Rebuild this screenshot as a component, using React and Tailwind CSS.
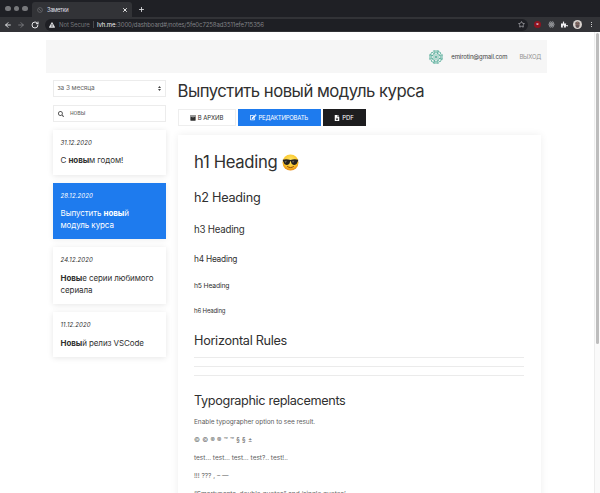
import React from "react";
import { FaArchive, FaEdit, FaFileDownload, FaSearch, FaPuzzlePiece, FaExclamationTriangle } from "react-icons/fa";
import { ArrowLeft, ArrowRight, RotateCw, Star, X, Plus } from "lucide-react";

function Browser() {
  return (
    <header className="flex h-8 shrink-0 flex-col bg-[#323337]">
      <div className="flex h-[17px] items-end bg-[#1f2025]">
        <div className="flex h-full w-8 items-center gap-[3px] pl-[5px]">
          <span className="size-[5.5px] rounded-full bg-[#77787b]" />
          <span className="size-[5.5px] rounded-full bg-[#77787b]" />
          <span className="size-[5.5px] rounded-full bg-[#77787b]" />
        </div>
        <div className="flex h-[15px] w-[100px] items-center rounded-t-[3px] bg-[#323337] pl-[5px] pr-[4px]">
          <svg className="size-[6px] text-[#66676b]" viewBox="0 0 12 12" fill="none" stroke="currentColor" strokeWidth="1.6">
            <circle cx="6" cy="6" r="4.8" />
            <path d="M3 3l6 6" />
          </svg>
          <span className="ml-[4px] grow text-[5.8px] leading-none tracking-[-0.4px] text-[#dcdde0]">Заметки</span>
          <X className="size-[6px] text-white" strokeWidth={3.5} />
        </div>
        <Plus className="mb-[4.5px] ml-[5.5px] size-[7px] text-[#dcdde0]" strokeWidth={3} />
      </div>
      <div className="flex h-[15px] items-center">
        <ArrowLeft className="ml-[4px] size-[8px] text-[#e6e7e9]" strokeWidth={2.8} />
        <ArrowRight className="ml-[5px] size-[8px] text-[#797a7e]" strokeWidth={2.8} />
        <RotateCw className="ml-[6px] size-[8px] text-[#e6e7e9]" strokeWidth={3} />
        <div className="ml-[6px] flex h-[12px] w-[483px] items-center rounded-full bg-[#1e1f24] pl-[4px] pr-[3px] text-[6px] leading-none">
          <FaExclamationTriangle className="size-[6px] text-[#dcdde0]" />
          <span className="ml-[4px] tracking-[-0.12px] text-[#75767a]">Not Secure</span>
          <span className="ml-[3px] h-[7px] w-px bg-[#48494d]" />
          <span className="ml-[3.5px] tracking-[-0.09px] text-[#808185]">
            <span className="text-[#f1f1f3]">lvh.me</span>:3000/dashboard#/notes/5fe0c7258ad3511efe715356
          </span>
          <Star className="ml-auto size-[7px] text-[#c6c7ca]" strokeWidth={2.2} />
        </div>
        <div className="ml-[6px] flex size-[7px] items-center justify-center rounded-full bg-[#8f1420] text-[3px] font-bold leading-none text-white">u</div>
        <svg className="ml-[6.5px] size-[7px] text-[#8f9094]" viewBox="0 0 14 14" fill="none" stroke="currentColor" strokeWidth="1.6">
          <circle cx="7" cy="7" r="2.6" fill="currentColor" />
          <ellipse cx="7" cy="7" rx="6.3" ry="2.7" />
          <ellipse cx="7" cy="7" rx="6.3" ry="2.7" transform="rotate(60 7 7)" />
          <ellipse cx="7" cy="7" rx="6.3" ry="2.7" transform="rotate(120 7 7)" />
        </svg>
        <FaPuzzlePiece className="ml-[6.5px] size-[7px] text-[#f1f1f3]" />
        <svg className="ml-[5px] size-[9px]" viewBox="0 0 18 18">
          <circle cx="9" cy="9" r="9" fill="#d8d2ce" />
          <path d="M4 8c0-7 10-7 10 0l-2-2H6z" fill="#4d4442" />
          <ellipse cx="9" cy="9" rx="4" ry="4.5" fill="#b88f83" />
          <path d="M5 9h8v3c-1 5-7 5-8 0z" fill="#605355" />
          <path d="M5 7.5h8" stroke="#3c3535" strokeWidth="1.5" />
        </svg>
        <div className="ml-[8.5px] flex flex-col gap-[1px]">
          <span className="size-[1.3px] rounded-full bg-white" />
          <span className="size-[1.3px] rounded-full bg-white" />
          <span className="size-[1.3px] rounded-full bg-white" />
        </div>
      </div>
    </header>
  );
}

function Identicon() {
  return (
    <svg className="size-[14px]" viewBox="0 0 28 28" fill="none" stroke="#4fa996" strokeWidth="1.6">
      {[0, 90, 180, 270].map((a) => (
        <g key={a} transform={`rotate(${a} 14 14)`}>
          <path d="M9 1.5h4L11 5zM15 1.5h4L17 5zM10 7l4-2 4 2-4 4z" />
          <path d="M3 9l3-5 4 3-3 4zM11 11l3 3" />
        </g>
      ))}
    </svg>
  );
}

function CoolFace() {
  return (
    <svg className="mb-[1px] ml-[5px] size-[17px]" viewBox="0 0 34 34">
      <defs>
        <radialGradient id="face" cx="50%" cy="35%" r="65%">
          <stop offset="0" stopColor="#ffe768" />
          <stop offset="0.65" stopColor="#fbc62c" />
          <stop offset="1" stopColor="#e98a12" />
        </radialGradient>
      </defs>
      <circle cx="17" cy="17" r="16" fill="url(#face)" />
      <path d="M1.5 11.5c5-1.5 10-1.5 15.500.5 5.500-2 10.500-2 15.500-.5l-.5 3c-.8.4-1 1-1.300 2-1 4.500-4 5.500-7 5.300-3.500-.2-5.200-3-5.700-6.300-.3-1.300-1.700-1.300-2 0-.5 3.300-2.200 6.100-5.700 6.300-3 .2-6-.8-7-5.300-.3-1-.5-1.600-1.300-2z" fill="#26221f" />
      <path d="M5 14l5-.5-3 5z" fill="#68615a" />
      <path d="M20 14l5-.5-3 5z" fill="#68615a" />
      <path d="M11 25c4 3 8 3 12 0" stroke="#8f4b0c" strokeWidth="2" fill="none" strokeLinecap="round" />
    </svg>
  );
}

function NoteCard({ date, active, children }) {
  return (
    <article
      className={
        active
          ? "flex flex-col bg-[#1e7bee] px-[8px] pb-[8px] pt-[8px] text-white shadow-[0_1px_6px_rgba(0,0,0,0.07)]"
          : "flex flex-col bg-white px-[8px] pb-[8.5px] pt-[8px] text-[#303030] shadow-[0_1px_6px_rgba(0,0,0,0.1)]"
      }
    >
      <time className="text-[6px] italic leading-[9px] tracking-[0.13px]">{date}</time>
      <p className="mt-[7px] whitespace-nowrap pt-[0.5px] text-[8px] leading-[12px] tracking-[-0.08px]">{children}</p>
    </article>
  );
}

function Sidebar() {
  return (
    <aside className="flex w-[113px] shrink-0 flex-col">
      <div className="flex h-[17px] items-center justify-between border border-[#ececec] px-[4px] text-[6.5px] text-[#666]">
        <span className="tracking-[-0.1px]">за 3 месяца</span>
        <svg className="h-[5px] w-[3px]" viewBox="0 0 6 10" fill="#444">
          <path d="M3 0l3 4.200H0zM3 10l3-4.200H0z" />
        </svg>
      </div>
      <div className="mt-[8px] flex h-[17px] items-center border border-[#ececec] px-[4.5px] text-[6.3px] text-[#666]">
        <FaSearch className="size-[6px] text-[#555]" />
        <span className="ml-[6px] tracking-[-0.1px]">новы</span>
      </div>
      <div className="mt-[7.5px] flex flex-col gap-[8px]">
        <NoteCard date="31.12.2020">С <b>новы</b>м годом!</NoteCard>
        <NoteCard date="28.12.2020" active>Выпустить <b>новы</b>й<br />модуль курса</NoteCard>
        <NoteCard date="24.12.2020"><b>Новы</b>е серии любимого<br />сериала</NoteCard>
        <NoteCard date="11.12.2020"><b>Новы</b>й релиз VSCode</NoteCard>
      </div>
    </aside>
  );
}

function Note() {
  return (
    <main className="flex w-[363px] flex-col">
      <h1 className="h-[23px] whitespace-nowrap text-[16.7px] leading-[23px] tracking-[-0.5px] text-[#303030]">Выпустить новый модуль курса</h1>
      <div className="mt-[6px] flex h-[17px] gap-[2px] text-[6px] leading-none">
        <button className="flex w-[58px] items-center justify-center gap-[2px] border border-[#eee] bg-white tracking-[-0.1px] text-[#303030]">
          <FaArchive className="size-[6px]" />В АРХИВ
        </button>
        <button className="flex w-[83px] items-center justify-center gap-[2px] bg-[#1e7bee] tracking-[-0.25px] text-white">
          <FaEdit className="size-[6.5px]" />РЕДАКТИРОВАТЬ
        </button>
        <button className="flex w-[43px] items-center justify-center gap-[2px] bg-[#1d1d1f] tracking-[-0.1px] text-white">
          <FaFileDownload className="size-[6px]" />PDF
        </button>
      </div>
      <section className="mt-[9px] h-[380px] whitespace-nowrap bg-white px-[16.5px] pt-[17px] text-[#303030] shadow-[0_0_8px_rgba(0,0,0,0.07)]">
        <h1 className="flex h-5 items-center pt-px text-[16.7px] tracking-[-0.33px]">h1 Heading<CoolFace /></h1>
        <h2 className="mt-[15px] h-5 text-[12.7px] leading-[22px] tracking-[-0.26px]">h2 Heading</h2>
        <h3 className="mt-[12px] h-5 text-[9.7px] leading-[22px] tracking-[-0.22px]">h3 Heading</h3>
        <h4 className="mt-[10px] text-[8.3px] leading-5 tracking-[-0.22px]">h4 Heading</h4>
        <h5 className="mt-[7px] text-[6.8px] leading-5 tracking-[-0.17px]">h5 Heading</h5>
        <h6 className="mt-[5px] text-[6px] leading-5 tracking-[-0.13px]">h6 Heading</h6>
        <h2 className="mt-[9px] h-5 text-[12.7px] leading-[22px] tracking-[-0.3px]">Horizontal Rules</h2>
        <hr className="mt-[7px] border-[#ebebeb]" />
        <hr className="mt-[8px] border-[#ebebeb]" />
        <hr className="mt-[8px] border-[#ebebeb]" />
        <h2 className="mt-[14px] h-5 text-[12.7px] leading-[22px] tracking-[-0.36px]">Typographic replacements</h2>
        <div className="mt-[3px] text-[6.5px] leading-[18px] text-[#606060]">
          <p className="tracking-[-0.05px]">Enable typographer option to see result.</p>
          <p className="tracking-[0.22px]">© © ® ® ™ ™ § § ±</p>
          <p>test… test… test… test?.. test!..</p>
          <p>!!! ??? , – —</p>
          <p>“Smartypants, double quotes” and ‘single quotes’</p>
        </div>
      </section>
    </main>
  );
}

export default function App() {
  return (
    <div className="flex h-[493px] w-[600px] flex-col overflow-hidden bg-white font-['Inter','Noto_Sans',sans-serif]">
      <Browser />
      <div className="flex min-h-0 grow justify-between">
        <div className="ml-[46px] w-[501px]">
          <nav className="mt-[8px] flex h-[33px] items-center justify-end bg-[#f6f6f6] pr-[6px] text-[6px]">
            <Identicon />
            <span className="ml-[8px] tracking-[-0.1px] text-[#404040]">emirotin@gmail.com</span>
            <span className="ml-[12px] tracking-[-0.2px] text-[#929292]">ВЫХОД</span>
          </nav>
          <div className="mt-[7px] flex gap-[12px] pl-[6.5px]">
            <Sidebar />
            <Note />
          </div>
        </div>
        <div className="w-[6px] border-l border-[#ededed] bg-[#fafafa] pl-[1px] pt-[1px]">
          <div className="h-[311px] w-[3px] rounded-full bg-[#bdbdbd]" />
        </div>
      </div>
    </div>
  );
}
